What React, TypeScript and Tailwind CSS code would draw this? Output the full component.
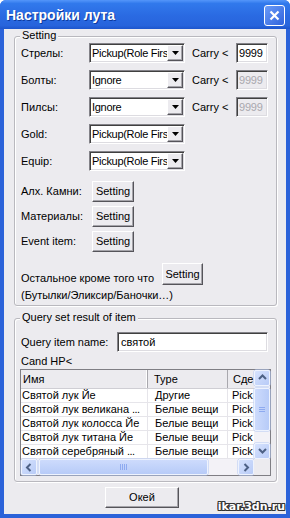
import type { ReactNode } from "react";

// Диалог "Настройки лута" в стиле Windows XP (Luna) с классическими контролами.

const raised =
  "border border-t-white border-l-white border-b-[#55545a] border-r-[#55545a] bg-[#ECEBEF] shadow-[inset_-1px_-1px_0_#a5a4aa]";
const sunken =
  "border border-t-[#838288] border-l-[#838288] border-b-white border-r-white p-[1px] shadow-[inset_1px_1px_0_#404040,inset_-1px_-1px_0_#dddce1]";

function Group({
  title,
  className,
  children,
}: {
  title: string;
  className: string;
  children: ReactNode;
}) {
  return (
    <div
      className={`relative rounded-[3px] border border-[#b9b8be] shadow-[inset_1px_1px_0_#fff,1px_1px_0_#fff] ${className}`}
    >
      <span className="absolute -top-[8px] left-[5px] bg-[#ECEBEF] px-[2px] leading-[13px]">
        {title}
      </span>
      {children}
    </div>
  );
}

function Combo({ value }: { value: string }) {
  return (
    <div className={`flex h-[20px] w-[96px] bg-white ${sunken}`}>
      <div className="flex-1 overflow-hidden whitespace-nowrap pl-[1px] leading-[16px] tracking-[-0.3px]">
        {value}
      </div>
      <div className={`flex h-[16px] w-[16px] items-center justify-center ${raised}`}>
        <svg width="7" height="4" viewBox="0 0 7 4">
          <path d="M0 0h7L3.5 4z" fill="#000" />
        </svg>
      </div>
    </div>
  );
}

function Field({
  value,
  disabled,
  className,
}: {
  value: string;
  disabled?: boolean;
  className: string;
}) {
  return (
    <div
      className={`h-[20px] overflow-hidden whitespace-nowrap leading-[16px] ${sunken} ${
        disabled ? "bg-[#ECEBEF] text-[#a9a8ae]" : "bg-white"
      } ${className}`}
    >
      {value}
    </div>
  );
}

function Btn({ label, className }: { label: string; className: string }) {
  return (
    <div className={`flex items-center justify-center leading-[13px] ${raised} ${className}`}>
      {label}
    </div>
  );
}

function LootRow({
  label,
  value,
  carry,
}: {
  label: string;
  value: string;
  carry?: "on" | "off";
}) {
  return (
    <div className="flex h-[20px] items-center">
      <span className="w-[68px]">{label}</span>
      <Combo value={value} />
      {carry && (
        <>
          <span className="ml-[7px] w-[44px]">Carry &lt;</span>
          <Field
            value="9999"
            disabled={carry === "off"}
            className="w-[32px] pl-[2px] tracking-[-0.2px]"
          />
        </>
      )}
    </div>
  );
}

function SettingRow({ label }: { label: string }) {
  return (
    <div className="flex h-[21px] items-center">
      <span className="w-[71px]">{label}</span>
      <Btn label="Setting" className="h-[21px] w-[42px]" />
    </div>
  );
}

function Arrow({ dir }: { dir: "up" | "down" | "left" | "right" }) {
  const d = {
    up: "M1 5L4.5 1.5L8 5",
    down: "M1 2L4.5 5.5L8 2",
    left: "M5.5 1L2 4.5L5.5 8",
    right: "M2.5 1L6 4.5L2.5 8",
  }[dir];
  return (
    <svg width="9" height="9" viewBox="0 0 9 9">
      <path d={d} fill="none" stroke="#4d6185" strokeWidth="2" />
    </svg>
  );
}

function ScrollBtn({ dir }: { dir: "up" | "down" | "left" | "right" }) {
  return (
    <div className="flex h-[16px] w-[16px] shrink-0 items-center justify-center rounded-[2px] border border-[#eef3fe] bg-[linear-gradient(135deg,#d6e2fd,#b8cbf7)] shadow-[0_0_0_0.5px_#b4c7f3]">
      <Arrow dir={dir} />
    </div>
  );
}

const rows = [
  ["Святой лук Йе", "", "Другие"],
  ["Святой лук великана", "...", "Белые вещи"],
  ["Святой лук колосса Йе", "", "Белые вещи"],
  ["Святой лук титана Йе", "", "Белые вещи"],
  ["Святой серебряный", "...", "Белые вещи"],
];

function ItemList() {
  return (
    <div className="-ml-[1px] mt-[1px] flex h-[107px] w-[251px] flex-col border border-[#7f7e84] bg-white">
      <div className="flex h-[89px]">
        <div className="flex w-[233px] flex-col overflow-hidden">
          <div className="flex h-[19px] shrink-0 border-b border-[#cfced4] bg-[#ECEBEF] leading-[18px]">
            <div className="w-[127px] shrink-0 border-r border-[#a9a8ae] pl-[2px] shadow-[inset_-1px_0_0_#fff]">
              Имя
            </div>
            <div className="w-[80px] shrink-0 border-r border-[#a9a8ae] pl-[6px]">Type</div>
            <div className="w-[26px] shrink-0 overflow-hidden whitespace-nowrap pl-[5px]">Сде</div>
          </div>
          {rows.map(([name, dots, type]) => (
            <div key={name} className="flex h-[14px] shrink-0 border-b border-[#e6e5ea] leading-[13px]">
              <div className="w-[127px] shrink-0 overflow-hidden whitespace-nowrap border-r border-[#e6e5ea] pl-[1px]">
                {name}
                {dots && <span className="ml-[3px] tracking-[-0.6px]">{dots}</span>}
              </div>
              <div className="w-[80px] shrink-0 overflow-hidden whitespace-nowrap border-r border-[#e6e5ea] pl-[7px]">
                {type}
              </div>
              <div className="w-[26px] shrink-0 overflow-hidden whitespace-nowrap pl-[4px]">Pick</div>
            </div>
          ))}
        </div>
        <div className="flex w-[16px] flex-col bg-[#f3f2f7]">
          <ScrollBtn dir="up" />
          <div className="flex-1">
            <div className="mt-[2px] flex h-[43px] w-[16px] items-center justify-center rounded-[2px] border border-[#eef3fe] bg-[linear-gradient(90deg,#cddbfc,#b7cbf8)] shadow-[0_0_0_0.5px_#b4c7f3]">
              <div className="flex flex-col gap-[1px]">
                <div className="h-px w-[6px] bg-[#8eaaf0]" />
                <div className="h-px w-[6px] bg-[#8eaaf0]" />
                <div className="h-px w-[6px] bg-[#8eaaf0]" />
              </div>
            </div>
          </div>
          <ScrollBtn dir="down" />
        </div>
      </div>
      <div className="flex h-[16px]">
        <div className="flex w-[233px] bg-[#f3f2f7]">
          <ScrollBtn dir="left" />
          <div className="ml-[2px] flex h-[16px] w-[169px] items-center justify-center rounded-[2px] border border-[#eef3fe] bg-[linear-gradient(180deg,#cddbfc,#b7cbf8)] shadow-[0_0_0_0.5px_#b4c7f3]">
            <div className="flex gap-[1px]">
              <div className="h-[6px] w-px bg-[#8eaaf0]" />
              <div className="h-[6px] w-px bg-[#8eaaf0]" />
              <div className="h-[6px] w-px bg-[#8eaaf0]" />
              <div className="h-[6px] w-px bg-[#8eaaf0]" />
            </div>
          </div>
          <div className="flex-1" />
          <ScrollBtn dir="right" />
        </div>
        <div className="w-[16px] bg-[#ECEBEF]" />
      </div>
    </div>
  );
}

export default function App() {
  return (
    <div className="relative flex h-[518px] w-[290px] flex-col overflow-hidden rounded-t-[6px] bg-[#2b62d9] font-['Liberation_Sans',Arial,sans-serif] text-[11px] text-black">
      <div className="flex h-[29px] shrink-0 items-start justify-between bg-[linear-gradient(180deg,#5496fa_0%,#3179ec_12%,#2a6ae2_55%,#2764dc_88%,#1d55cc_100%)]">
        <span className="pl-[6px] pt-[7px] text-[14px] font-bold leading-[17px] text-white [text-shadow:1px_1px_0_#0c3a9e]">
          Настройки лута
        </span>
        <div className="mr-[5px] mt-[5px] flex h-[21px] w-[21px] items-center justify-center rounded-[3px] border border-white bg-[linear-gradient(135deg,#6b9bf7,#2f63dd)]">
          <svg width="11" height="11" viewBox="0 0 11 11">
            <path d="M1.5 1.5l8 8M9.5 1.5l-8 8" stroke="#fff" strokeWidth="2.2" />
          </svg>
        </div>
      </div>

      <div className="mx-[4px] mb-[4px] flex flex-1 flex-col bg-[#ECEBEF]">
        <Group title="Setting" className="ml-[10px] mt-[7px] h-[270px] w-[263px] pl-[6px] pt-[6px]">
          <div className="flex flex-col gap-[7px]">
            <LootRow label="Стрелы:" value="Pickup(Role Firs" carry="on" />
            <LootRow label="Болты:" value="Ignore" carry="off" />
            <LootRow label="Пилсы:" value="Ignore" carry="off" />
            <LootRow label="Gold:" value="Pickup(Role Firs" />
            <LootRow label="Equip:" value="Pickup(Role Firs" />
          </div>
          <div className="mt-[10px] flex flex-col gap-[4px]">
            <SettingRow label="Алх. Камни:" />
            <SettingRow label="Материалы:" />
            <SettingRow label="Event item:" />
          </div>
          <div className="mt-[11px] flex items-end">
            <span className="w-[141px] whitespace-nowrap leading-[14px]">Остальное кроме того что</span>
            <Btn label="Setting" className="h-[22px] w-[41px]" />
          </div>
          <div className="mt-[3px] leading-[14px]">(Бутылки/Эликсир/Баночки…)</div>
        </Group>

        <Group
          title="Query set result of item"
          className="ml-[10px] mt-[12px] h-[164px] w-[263px] pl-[6px] pt-[13px]"
        >
          <div className="flex h-[20px] items-center">
            <span className="w-[96px]">Query item name:</span>
            <Field value="святой" className="w-[151px] pl-[3px]" />
          </div>
          <div className="mt-[2px] leading-[14px]">Cand HP&lt;</div>
          <ItemList />
        </Group>

        <Btn label="Окей" className="ml-[101px] mt-[5px] h-[21px] w-[74px]" />
      </div>

      <span className="absolute bottom-[4px] right-[5px] font-['DejaVu_Sans',sans-serif] text-[11px] font-bold leading-[14px] text-white [text-shadow:1px_0_0_#333,-1px_0_0_#333,0_1px_0_#333,0_-1px_0_#333,1px_1px_0_#333,-1px_-1px_0_#333,1px_-1px_0_#333,-1px_1px_0_#333]">
        ikar.3dn.ru
      </span>
    </div>
  );
}
